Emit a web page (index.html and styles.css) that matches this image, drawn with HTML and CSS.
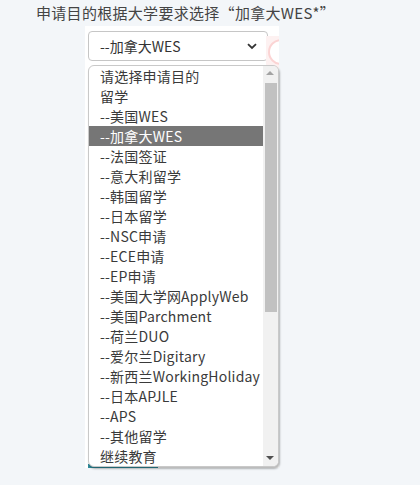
FILE: index.html
```html
<!DOCTYPE html>
<html lang="zh-CN">
<head>
<meta charset="utf-8">
<link rel="stylesheet" href="styles.css">
</head>
<body>
<div class="label">申请目的根据大学要求选择“加拿大WES*”</div>
<div class="panel">
  <div class="select">
    <span>--加拿大WES</span>
    <svg class="chev" width="10" height="7" viewBox="0 0 10 7"><path d="M1 1.2 L5 5 L9 1.2" fill="none" stroke="#333" stroke-width="1.8"/></svg>
  </div>
  <div class="deco-clip"><div class="deco"></div></div>
  <div class="below">
    <div class="teal"></div>
  </div>
  <div class="listbox">
    <ul class="options">
      <li>请选择申请目的</li>
      <li>留学</li>
      <li>--美国WES</li>
      <li class="sel">--加拿大WES</li>
      <li>--法国签证</li>
      <li>--意大利留学</li>
      <li>--韩国留学</li>
      <li>--日本留学</li>
      <li>--NSC申请</li>
      <li>--ECE申请</li>
      <li>--EP申请</li>
      <li>--美国大学网ApplyWeb</li>
      <li>--美国Parchment</li>
      <li>--荷兰DUO</li>
      <li>--爱尔兰Digitary</li>
      <li>--新西兰WorkingHoliday</li>
      <li>--日本APJLE</li>
      <li>--APS</li>
      <li>--其他留学</li>
      <li>继续教育</li>
    </ul>
    <div class="scrollbar">
      <div class="arrow up"></div>
      <div class="thumb"></div>
      <div class="arrow down"></div>
    </div>
  </div>
</div>
</body>
</html>
```
FILE: styles.css
```css
html, body {
  margin: 0;
  padding: 0;
}
body {
  background: #f3f6f9;
  font-family: "Noto Sans CJK SC", "Open Sans", sans-serif;
  width: 420px;
  height: 485px;
  overflow: hidden;
}
.label {
  padding: 2px 0 0 36px;
  height: 24px;
  font-size: 15px;
  line-height: 22px;
  letter-spacing: 0.3px;
  color: #444;
}
.panel {
  position: relative;
  margin-left: 85px;
  width: 194px;
  height: 442px;
  background: #fff;
  padding: 5px 0 0 3px;
  box-sizing: border-box;
}
.select {
  width: 180px;
  height: 30px;
  box-sizing: border-box;
  border: 1px solid #c6c6c6;
  border-radius: 4px;
  display: flex;
  align-items: center;
  justify-content: space-between;
  padding: 0 10px 0 11px;
  font-size: 14px;
  color: #333;
  background: #fff;
}
.chev {
  display: block;
}
.deco-clip {
  position: absolute;
  left: 181px;
  top: 10px;
  width: 13px;
  height: 32px;
  overflow: hidden;
  background: #fdf1f1;
}
.deco {
  margin: 3px 0 0 2px;
  width: 22px;
  height: 22px;
  border-radius: 50%;
  border: 2px solid #fbd4d4;
  background: #fff;
}
.below {
  position: absolute;
  left: 3px;
  bottom: 0;
  width: 70px;
  height: 4px;
}
.teal {
  height: 100%;
  background: #2f8b9b;
}
.listbox {
  position: absolute;
  left: 3px;
  top: 39px;
  width: 191px;
  height: 402px;
  box-sizing: border-box;
  background: #fff;
  border: 1px solid #c9c9c9;
  border-radius: 6px;
  box-shadow: 1px 2px 2px rgba(0,0,0,0.28);
  display: flex;
  overflow: hidden;
}
.options {
  list-style: none;
  margin: 0;
  padding: 0;
  flex: 1;
}
.options li {
  height: 20px;
  line-height: 20px;
  font-size: 14px;
  letter-spacing: 0.2px;
  color: #3a3a3a;
  padding-left: 11px;
  white-space: nowrap;
}
.options li.sel {
  background: #767676;
  color: #fff;
}
.scrollbar {
  width: 15px;
  background: #f1f1f1;
  display: flex;
  flex-direction: column;
  align-items: center;
}
.arrow {
  height: 17px;
  width: 15px;
  position: relative;
}
.arrow::after {
  content: "";
  position: absolute;
  left: 3px;
  width: 0;
  height: 0;
  border-left: 4px solid transparent;
  border-right: 4px solid transparent;
}
.arrow.up::after {
  top: 5px;
  border-bottom: 4px solid #a3a3a3;
}
.arrow.down::after {
  top: 7px;
  border-top: 4px solid #505050;
}
.thumb {
  width: 12px;
  height: 229px;
  background: #c1c1c1;
}
.scrollbar .arrow.down {
  margin-top: auto;
}
```
